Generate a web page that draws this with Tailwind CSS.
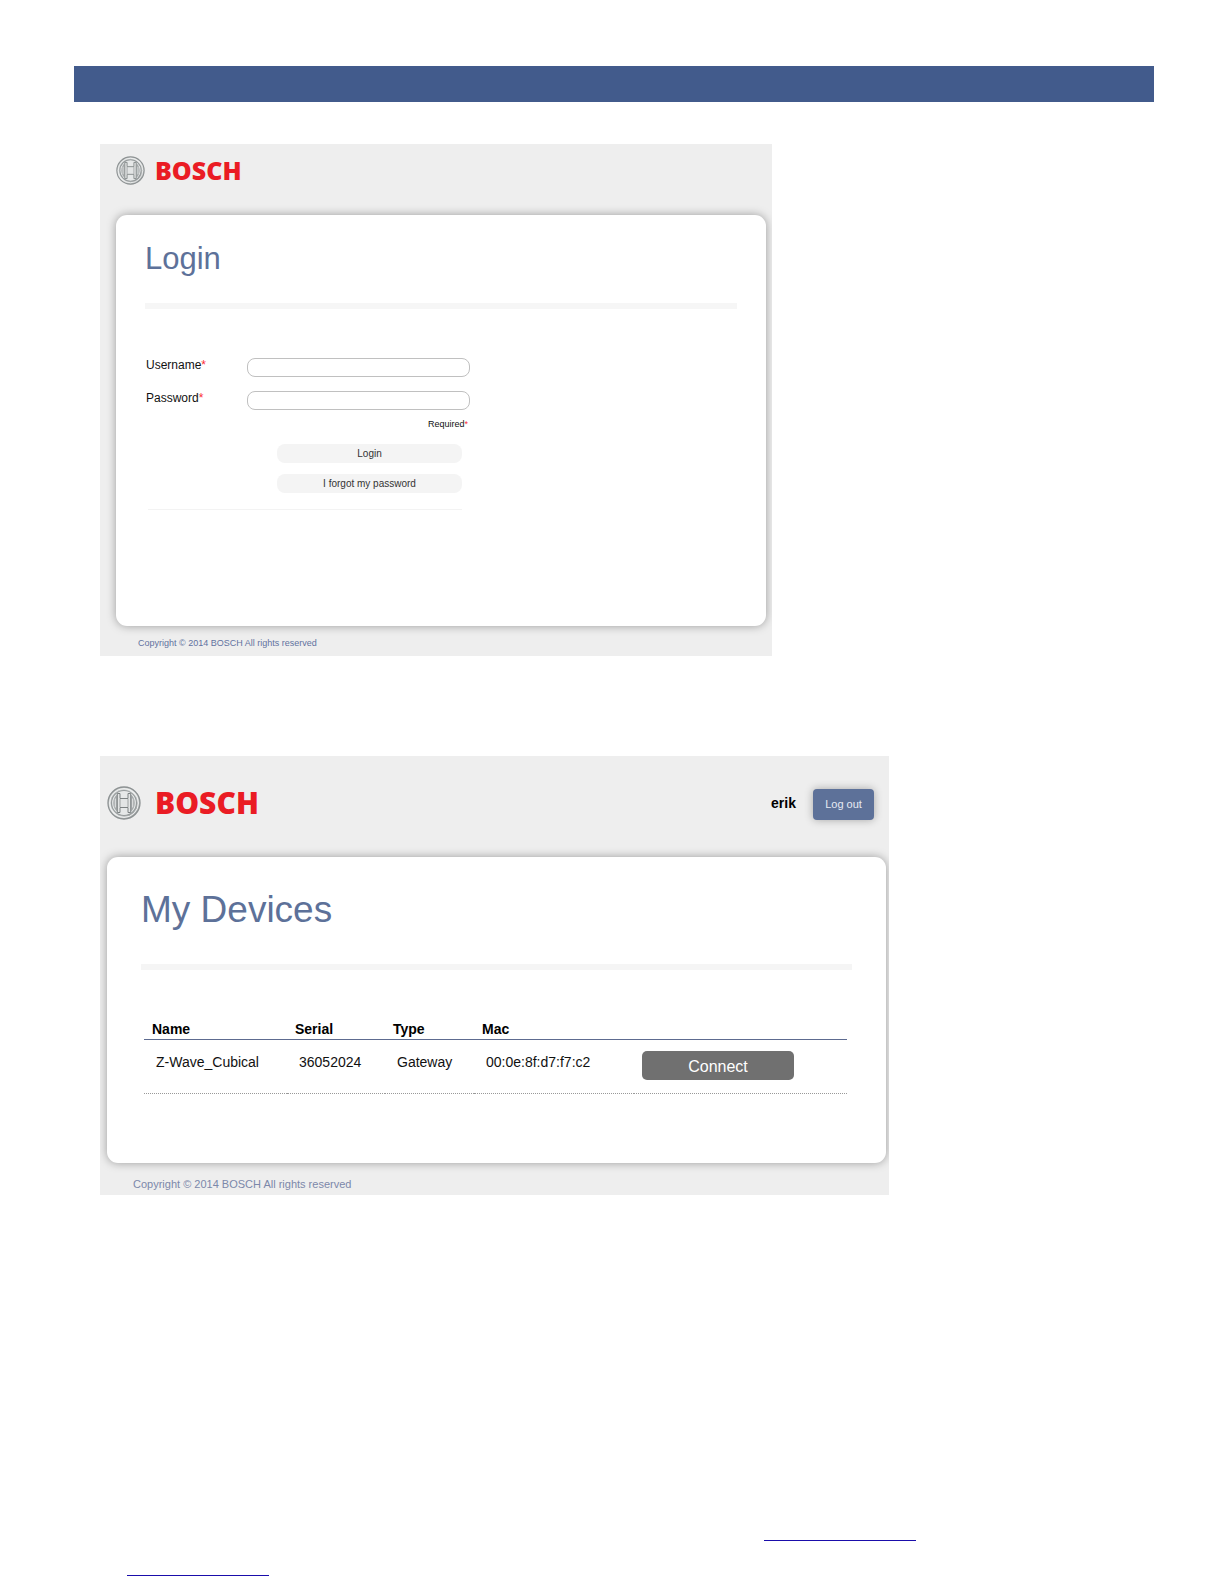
<!DOCTYPE html>
<html lang="en">
<head>
  <meta charset="UTF-8" />
  <meta name="viewport" content="width=device-width, initial-scale=1" />
  <title>Bosch Remote Connect</title>
  <script src="https://cdn.jsdelivr.net/npm/@tailwindcss/browser@4"></script>
</head>
<body class="bg-white text-[#111] font-['Liberation_Sans',Arial,sans-serif]">

  <!-- Logo, shared by both screens -->
  <svg class="absolute size-0">
    <defs>
      <linearGradient id="metal" x1="0" y1="0" x2="1" y2="1">
        <stop offset="0" stop-color="#b4b8b8" />
        <stop offset="0.5" stop-color="#e6e8e8" />
        <stop offset="1" stop-color="#868b8c" />
      </linearGradient>
      <symbol id="armature" viewBox="0 0 34 34">
        <circle cx="17" cy="17" r="16" fill="url(#metal)" stroke="#8d9293" stroke-width="1.3" />
        <circle cx="17" cy="17" r="14.4" fill="none" stroke="#f2f3f3" stroke-width="1" />
        <circle cx="17" cy="17" r="12.5" fill="#e6e8e8" stroke="#969b9c" stroke-width="1.2" />
        <path d="M10 8.500C5 12.500 5 21.500 10 25.500Z" fill="#a5a9aa" />
        <path d="M24 8.500C29 12.500 29 21.500 24 25.500Z" fill="#a5a9aa" />
        <path d="M10.300 7.500V26.500H13V21.500H21V26.500H23.700V7.500H21V12.500H13V7.500Z" fill="#e3e5e5" stroke="#7d8283" stroke-width="1" />
        <path d="M13 13V21M21 13V21" stroke="#8d9293" stroke-width="0.8" />
        <path d="M8.300 12.500V21.500M25.700 12.500V21.500" stroke="#eceeee" stroke-width="0.9" />
      </symbol>
    </defs>
  </svg>

  <main class="pt-[66px] pl-[74px] pr-[70px]">
    <div class="h-9 bg-[#425b8c]"></div>

    <!-- Login screen -->
    <section class="mt-[42px] ml-[26px] max-w-[672px] bg-[#eeeeee] pl-4 pr-1.5 overflow-hidden">
      <header class="h-[71px] flex items-start pt-3">
        <div class="flex items-center gap-[10px] h-7">
          <svg class="size-[29px]"><use href="#armature" /></svg>
          <span class="font-['Open_Sans','Noto_Sans',sans-serif] font-extrabold text-[25px] leading-7 text-[#ea1c24]">BOSCH</span>
        </div>
      </header>

      <div class="min-h-[411px] bg-white rounded-[11px] shadow-[0_0_10px_rgba(0,0,0,0.35)] pt-6 px-[29px]">
        <h1 class="text-[31px] leading-10 text-[#5d7199]">Login</h1>
        <div class="mt-6 h-1.5 bg-[#f6f6f6]"></div>

        <form class="mt-[49px] pl-px max-w-[325px] text-xs" onsubmit="return false">
          <div class="flex items-start justify-between">
            <label for="username" class="leading-[14px]">Username<span class="text-red-500">*</span></label>
            <input id="username" type="text" class="w-[223px] h-[19px] border border-[#c0c0c0] rounded-lg px-2">
          </div>
          <div class="mt-[14px] flex items-start justify-between">
            <label for="password" class="leading-[14px]">Password<span class="text-red-500">*</span></label>
            <input id="password" type="password" class="w-[223px] h-[19px] border border-[#c0c0c0] rounded-lg px-2">
          </div>
          <p class="mt-2 pr-0.5 text-right text-[9px] leading-3">Required<span class="text-red-500">*</span></p>
          <div class="mt-[14px] pr-2 flex flex-col items-end gap-[11px]">
            <button type="submit" class="w-[185px] h-[19px] pt-px rounded-lg bg-[#f4f4f4] text-[10px] text-[#333]">Login</button>
            <button type="button" class="w-[185px] h-[19px] pt-px rounded-lg bg-[#f4f4f4] text-[10px] text-[#333]">I forgot my password</button>
          </div>
          <hr class="mt-4 mr-2 ml-0.5 border-[#f3f3f3]">
        </form>
      </div>

      <footer class="h-[30px] pt-[11px] pl-[22px] text-[9px] leading-3 text-[#6272a0]">Copyright © 2014 BOSCH All rights reserved</footer>
    </section>

    <!-- Devices screen -->
    <section class="mt-[100px] ml-[26px] max-w-[789px] bg-[#eeeeee] pl-[7px] pr-[3px] overflow-hidden">
      <header class="h-[101px] flex items-start justify-between pt-[30px] pr-3">
        <div class="flex items-center gap-[14px] h-[34px]">
          <svg class="size-[34px]"><use href="#armature" /></svg>
          <span class="font-['Open_Sans','Noto_Sans',sans-serif] font-extrabold text-[30px] leading-[34px] text-[#ea1c24]">BOSCH</span>
        </div>
        <div class="flex items-center gap-[17px] pt-[3px]">
          <span class="font-bold text-sm leading-4 pb-1 text-black">erik</span>
          <button class="w-[61px] h-[31px] rounded bg-[#5d7199] text-[11px] text-[#e6eaf3] shadow-[0_0_8px_rgba(0,0,0,0.3)]">Log out</button>
        </div>
      </header>

      <div class="min-h-[306px] bg-white rounded-[11px] shadow-[0_0_10px_rgba(0,0,0,0.35)] pt-[33px] px-[34px]">
        <h1 class="text-[37px] leading-10 text-[#5d7199]">My Devices</h1>
        <div class="mt-[34px] h-1.5 bg-[#f5f5f5]"></div>

        <div class="mt-12 pl-[3px] pr-[5px]">
          <table class="w-full table-fixed border-separate border-spacing-0 text-sm text-left">
            <colgroup>
              <col class="w-[143px]">
              <col class="w-[98px]">
              <col class="w-[89px]">
              <col class="w-[160px]">
              <col>
            </colgroup>
            <thead>
              <tr class="text-black">
                <th class="pl-2 pt-px border-b border-[#5d6b90] font-bold leading-5">Name</th>
                <th class="pl-2 pt-px border-b border-[#5d6b90] font-bold leading-5">Serial</th>
                <th class="pl-2 pt-px border-b border-[#5d6b90] font-bold leading-5">Type</th>
                <th class="pl-2 pt-px border-b border-[#5d6b90] font-bold leading-5">Mac</th>
                <th class="border-b border-[#5d6b90]"></th>
              </tr>
            </thead>
            <tbody>
              <tr class="align-top">
                <td class="pl-3 pt-3 border-b border-dotted border-[#999] leading-5">Z-Wave_Cubical</td>
                <td class="pl-3 pt-3 border-b border-dotted border-[#999] leading-5">36052024</td>
                <td class="pl-3 pt-3 border-b border-dotted border-[#999] leading-5">Gateway</td>
                <td class="pl-3 pt-3 border-b border-dotted border-[#999] leading-5">00:0e:8f:d7:f7:c2</td>
                <td class="pl-2 pt-[11px] pb-[13px] border-b border-dotted border-[#999]"><button class="block w-[152px] h-[29px] pt-0.5 rounded-[5px] bg-[#707070] text-base leading-5 text-white">Connect</button></td>
              </tr>
            </tbody>
          </table>
        </div>
      </div>

      <footer class="h-8 pt-[13px] pl-[26px] text-[11px] leading-4 text-[#7c88aa]">Copyright © 2014 BOSCH All rights reserved</footer>
    </section>

    <!-- Footer links -->
    <div class="mt-[325px] ml-[53px] pb-2">
      <div class="flex justify-end pr-[238px]">
        <a href="#" class="block w-[152px] h-[21px] border-b border-[#1a0dab]"></a>
      </div>
      <a href="#" class="mt-[14px] block w-[142px] h-[21px] border-b border-[#1a0dab]"></a>
    </div>
  </main>
</body>
</html>
